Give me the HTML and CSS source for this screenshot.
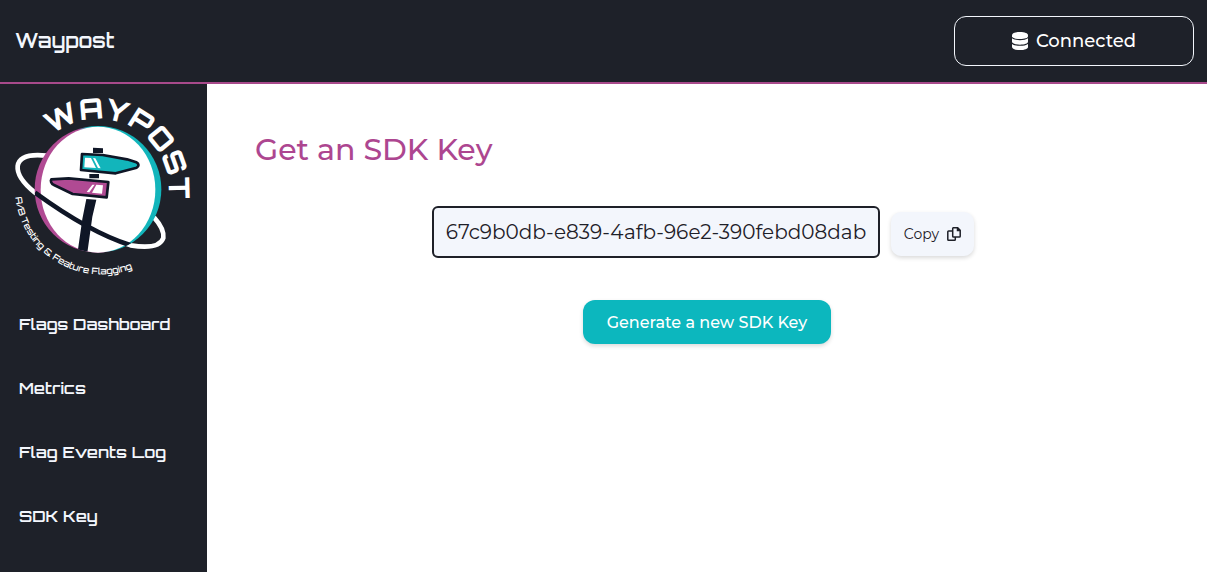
FILE: index.html
```html
<!DOCTYPE html>
<html lang="en">
<head>
<meta charset="utf-8">
<title>Waypost</title>
<link rel="stylesheet" href="styles.css">
</head>
<body>
<header class="topbar">
  <a class="brand" href="#">Waypost</a>
  <button class="status" type="button">
    <svg class="status-icon" viewBox="0 0 16 18" aria-hidden="true">
      <path d="M0 3.2C0 1.3 3.2 0 8 0s8 1.3 8 3.2v1C16 5.900 12.600 7 8 7S0 5.900 0 4.200z"/>
      <path d="M0 6.300C1.700 7.600 4.600 8.200 8 8.200s6.300-.6 8-1.900v3.500c0 1.700-3.400 2.900-8 2.900s-8-1.200-8-2.900z"/>
      <path d="M0 11.900c1.700 1.300 4.600 1.900 8 1.900s6.300-.6 8-1.900v3C16 16.800 12.600 18 8 18s-8-1.200-8-3.100z"/>
    </svg>
    <span>Connected</span>
  </button>
</header>
<div class="layout">
  <aside class="sidebar">
    <svg class="logo" viewBox="0 0 621 618" role="img" aria-label="Waypost logo">
      <defs>
        <linearGradient id="ring" x1="0" y1="0.6" x2="1" y2="0.4">
          <stop offset="0.44" stop-color="#b04a93"/>
          <stop offset="0.52" stop-color="#12b5bb"/>
        </linearGradient>
        <clipPath id="globe"><circle cx="294" cy="316" r="190"/></clipPath>
        <path id="name-arc" d="M155 156A213 213 0 0 1 468 440"/>
        <path id="tag-arc" d="M46 340A260 260 0 0 0 471 511"/>
      </defs>
      <path class="orbit" d="M140 215C95 210 58 215 53 246C50 275 75 302 105 326C190 388 290 452 392 484C440 492 480 490 490 462C493 440 480 420 462 400"/>
      <circle cx="294" cy="316" r="190" fill="url(#ring)"/>
      <ellipse cx="294" cy="317" rx="172" ry="189" fill="#fff"/>
      <g clip-path="url(#globe)">
        <path class="orbit orbit-dark" d="M105 326C190 388 290 452 392 484"/>
        <path class="ink" d="M259 345L289 347L277 398L262 506L233 503L247 405Z"/>
      </g>
      <path class="ink" d="M279 191L309 193V207H279ZM268 270H297V283H268Z"/>
      <path class="sign sign-teal" d="M246 210L308 213L381 226L409 235C418 239 417 247 410 251L347 268L243 258Z"/>
      <path class="sign sign-pink" d="M154 286L206 283L325 294L320 340L218 330L162 303C153 299 151 290 154 286Z"/>
      <path fill="#fff" d="M255 221L273 222L288 252L253 250ZM279 222L286 223L302 253L294 252Z"/>
      <path fill="#fff" d="M289 302L309 304L306 329L276 326ZM277 302L284 302L268 325L260 324Z"/>
      <text class="logo-name"><textPath href="#name-arc">WAYPOST</textPath></text>
      <text class="logo-tag"><textPath href="#tag-arc">A/B Testing &amp; Feature Flagging</textPath></text>
    </svg>
    <nav class="nav">
      <a href="#">Flags Dashboard</a>
      <a href="#">Metrics</a>
      <a href="#">Flag Events Log</a>
      <a href="#">SDK Key</a>
    </nav>
  </aside>
  <main class="content">
    <h1>Get an SDK Key</h1>
    <div class="key-row">
      <input class="key" type="text" aria-label="SDK key" value="67c9b0db-e839-4afb-96e2-390febd08dab" readonly>
      <button class="copy" type="button">
        <span>Copy</span>
        <svg class="copy-icon" viewBox="0 0 14 14" aria-hidden="true">
          <path d="M5.700.8H10.700L13.200 3.300V9.200Q13.200 10 12.400 10H6.500Q5.700 10 5.700 9.200V1.600Q5.700.8 6.500.8M10.500 1V3.500H13M5.700 4H1.600Q.8 4 .8 4.800V12.400Q.8 13.200 1.600 13.200H7.500Q8.300 13.200 8.300 12.400V10"/>
        </svg>
      </button>
    </div>
    <button class="generate" type="button">Generate a new SDK Key</button>
  </main>
</div>
</body>
</html>
```
FILE: styles.css
```css
* { box-sizing: border-box; }

body {
  margin: 0;
  min-height: 100vh;
  display: flex;
  flex-direction: column;
  font-family: Montserrat, Inter, sans-serif;
  color: #1e2028;
  background: #fff;
}

button { font-family: inherit; cursor: pointer; }

.topbar {
  display: flex;
  align-items: center;
  justify-content: space-between;
  padding: 16px 13px 16px 15px;
  background: #1e2129;
  border-bottom: 2px solid #a84a8b;
}

.brand {
  font: 600 20px/24px Orbitron, Inter, sans-serif;
  color: #f3f6fc;
  text-decoration: none;
}

.status {
  display: flex;
  align-items: center;
  justify-content: center;
  gap: 8px;
  width: 240px;
  height: 50px;
  border: 1px solid #f3f6fc;
  border-radius: 12px;
  background: transparent;
  color: #fff;
  font-size: 18px;
  font-weight: 500;
}

.status-icon { width: 16px; height: 18px; fill: #fff; }

.layout { flex: 1; display: flex; }

.sidebar {
  flex: none;
  width: 207px;
  background: #1e2129;
}

.logo { display: block; width: 100%; }

.orbit { fill: none; stroke: #fff; stroke-width: 14; }
.orbit-dark { stroke: #0f1626; }
.ink { fill: #0f1626; }
.sign { stroke: #0f1626; stroke-width: 8; stroke-linejoin: round; }
.sign-teal { fill: #12b5bb; }
.sign-pink { fill: #b04a93; }
.logo-name { font: 800 86px Orbitron, "DejaVu Sans", sans-serif; fill: #fff; }
.logo-tag { font: 500 27px Orbitron, "DejaVu Sans", sans-serif; fill: #fff; }

.nav {
  display: flex;
  flex-direction: column;
  gap: 40px;
  padding: 22px 19px;
}

.nav a {
  font: 600 16px/24px Orbitron, Inter, sans-serif;
  color: #f3f6fc;
  text-decoration: none;
}

.content {
  flex: 1;
  display: flex;
  flex-direction: column;
  align-items: center;
  padding: 46px 48px;
}

h1 {
  align-self: flex-start;
  margin: 0 0 36px;
  font-size: 30px;
  line-height: 40px;
  font-weight: 500;
  color: #ad4690;
}

.key-row {
  display: flex;
  align-items: flex-end;
  gap: 11px;
  margin: 0 8px 42px 0;
}

.key {
  width: 448px;
  height: 52px;
  padding: 0 12px;
  border: 2px solid #1e2028;
  border-radius: 6px;
  background: #f3f6fc;
  color: #1e2028;
  font-family: inherit;
  font-size: 20px;
}

.copy {
  display: flex;
  align-items: center;
  gap: 8px;
  height: 44px;
  margin-bottom: 2px;
  padding: 0 13px;
  border: 0;
  border-radius: 10px;
  background: #f3f6fc;
  color: #1e2028;
  font-size: 14px;
  box-shadow: 0 2px 4px rgba(0, 0, 0, 0.15);
}

.copy-icon {
  width: 14px;
  height: 14px;
  fill: none;
  stroke: #1e2028;
  stroke-width: 1.5;
}

.generate {
  height: 44px;
  padding: 0 24px;
  border: 0;
  border-radius: 12px;
  background: #0cb7be;
  color: #fff;
  font-size: 16px;
  font-weight: 500;
  box-shadow: 0 2px 4px rgba(0, 0, 0, 0.15);
}
```
